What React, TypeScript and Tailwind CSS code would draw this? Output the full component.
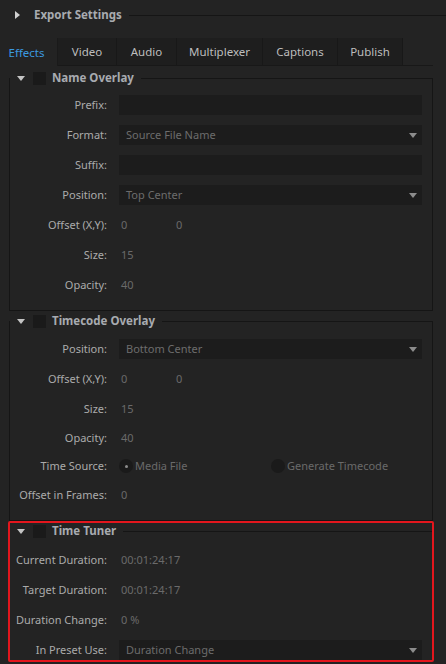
import React from "react";

const font = { fontFamily: '"Noto Sans", "Open Sans", sans-serif' };

function DownTri({ color = "#c4c4c4" }: { color?: string }) {
  return (
    <svg width="8" height="5" viewBox="0 0 8 5" className="block">
      <path d="M0 0H8L4 5Z" fill={color} />
    </svg>
  );
}

function Legend({ title }: { title: string }) {
  return (
    <legend className="pr-[7px]">
      <div className="flex h-[16px] items-center">
        <span className="ml-[7px] w-[8px]">
          <DownTri />
        </span>
        <span className="ml-[8px] h-[13px] w-[13px] bg-[#1a1a1a]" />
        <span className="ml-[6px] text-[11.5px] font-bold text-[#a8abb0]">{title}</span>
      </div>
    </legend>
  );
}

function Row({
  label,
  children,
  className = "",
}: {
  label: string;
  children?: React.ReactNode;
  className?: string;
}) {
  return (
    <div className={"flex h-[20px] items-center " + className}>
      <div className="w-[97px] shrink-0 whitespace-nowrap text-right text-[#ababab]">{label}</div>
      <div className="ml-[12px] flex h-full flex-1 items-center">{children}</div>
    </div>
  );
}

function Input() {
  return <div className="h-full w-[303px] bg-[#1c1c1c]" />;
}

function Select({ value }: { value: string }) {
  return (
    <div className="flex h-full w-[303px] items-center justify-between bg-[#1c1c1c] pl-[7px] pr-[5px] text-[#6c6c6c]">
      <span>{value}</span>
      <DownTri color="#8c8c8c" />
    </div>
  );
}

function Value({ children }: { children: React.ReactNode }) {
  return <span className="pl-[2px] text-[#6a6a6a]">{children}</span>;
}

function Radio({ checked, label }: { checked?: boolean; label: string }) {
  return (
    <div className="flex items-center">
      <span className="flex h-[14px] w-[14px] items-center justify-center rounded-full bg-[#1a1a1a]">
        {checked && <span className="h-[3px] w-[3px] rounded-full bg-[#8c8c8c]" />}
      </span>
      <span className="ml-[2px] text-[#6a6a6a]">{label}</span>
    </div>
  );
}

const tabs = [
  { name: "Effects", w: "w-[58px]" },
  { name: "Video", w: "w-[59px]" },
  { name: "Audio", w: "w-[60px]" },
  { name: "Multiplexer", w: "w-[86px]" },
  { name: "Captions", w: "w-[75px]" },
  { name: "Publish", w: "w-[65px]" },
];

export default function App() {
  return (
    <div className="h-[664px] w-[446px] overflow-hidden bg-[#232323] text-[11px]" style={font}>
      {/* header */}
      <div className="flex h-[30px] items-center">
        <svg width="5" height="8" viewBox="0 0 5 8" className="ml-[15px] block">
          <path d="M0 0V8L5 4Z" fill="#d0d0d0" />
        </svg>
        <span className="ml-[14px] text-[11.5px] font-bold text-[#a8abb0]">Export Settings</span>
        <div className="ml-[7px] h-px flex-1 bg-[#151515]" />
      </div>

      {/* tabs */}
      <div className="mt-[8px] flex h-[28px] w-[433px] text-[11.5px]">
        {tabs.map((t, i) =>
          i === 0 ? (
            <div key={t.name} className={`${t.w} flex items-center justify-center border-r border-[#1a1a1a] pr-[4px] pt-px text-[#3b9ae0]`}>
              {t.name}
            </div>
          ) : (
            <div
              key={t.name}
              className={`${t.w} flex items-center justify-center border-b border-r border-[#181818] bg-[#1e1e1e] pt-px text-[#bdbdbd]`}
            >
              {t.name}
            </div>
          )
        )}
        <div className="flex-1 border-b border-[#181818]" />
      </div>

      {/* Name Overlay */}
      <fieldset className="ml-[9px] mt-[4px] w-[424px] border border-[#151515] pb-[15px] pr-[10px] pt-[9px]">
        <Legend title="Name Overlay" />
        <div className="flex flex-col gap-[10px]">
          <Row label="Prefix:">
            <Input />
          </Row>
          <Row label="Format:">
            <Select value="Source File Name" />
          </Row>
          <Row label="Suffix:">
            <Input />
          </Row>
          <Row label="Position:">
            <Select value="Top Center" />
          </Row>
          <Row label="Offset (X,Y):">
            <span className="w-[55px]">
              <Value>0</Value>
            </span>
            <Value>0</Value>
          </Row>
          <Row label="Size:">
            <Value>15</Value>
          </Row>
          <Row label="Opacity:">
            <Value>40</Value>
          </Row>
        </div>
      </fieldset>

      {/* Timecode Overlay */}
      <fieldset className="ml-[9px] mt-[2px] w-[424px] border border-[#151515] pb-[15px] pr-[10px] pt-[10px]">
        <Legend title="Timecode Overlay" />
        <div className="flex flex-col">
          <Row label="Position:">
            <Select value="Bottom Center" />
          </Row>
          <Row label="Offset (X,Y):" className="mt-[10px]">
            <span className="w-[55px]">
              <Value>0</Value>
            </span>
            <Value>0</Value>
          </Row>
          <Row label="Size:" className="mt-[10px]">
            <Value>15</Value>
          </Row>
          <Row label="Opacity:" className="mt-[9px]">
            <Value>40</Value>
          </Row>
          <Row label="Time Source:" className="mt-[8px]">
            <div className="w-[152px]">
              <Radio checked label="Media File" />
            </div>
            <Radio label="Generate Timecode" />
          </Row>
          <Row label="Offset in Frames:" className="mt-[9px]">
            <Value>0</Value>
          </Row>
        </div>
      </fieldset>

      {/* Time Tuner, outlined in red */}
      <div className="ml-[8px] w-[426px] rounded-[2px] border-2 border-[#e3161d]">
        <fieldset className="border-0 border-t border-[#151515] pr-[10px] pt-[11px]">
          <Legend title="Time Tuner" />
          <div className="flex flex-col gap-[10px]">
            <Row label="Current Duration:">
              <Value>00:01:24:17</Value>
            </Row>
            <Row label="Target Duration:">
              <Value>00:01:24:17</Value>
            </Row>
            <Row label="Duration Change:">
              <Value>0 %</Value>
            </Row>
            <Row label="In Preset Use:">
              <Select value="Duration Change" />
            </Row>
          </div>
        </fieldset>
      </div>
    </div>
  );
}
